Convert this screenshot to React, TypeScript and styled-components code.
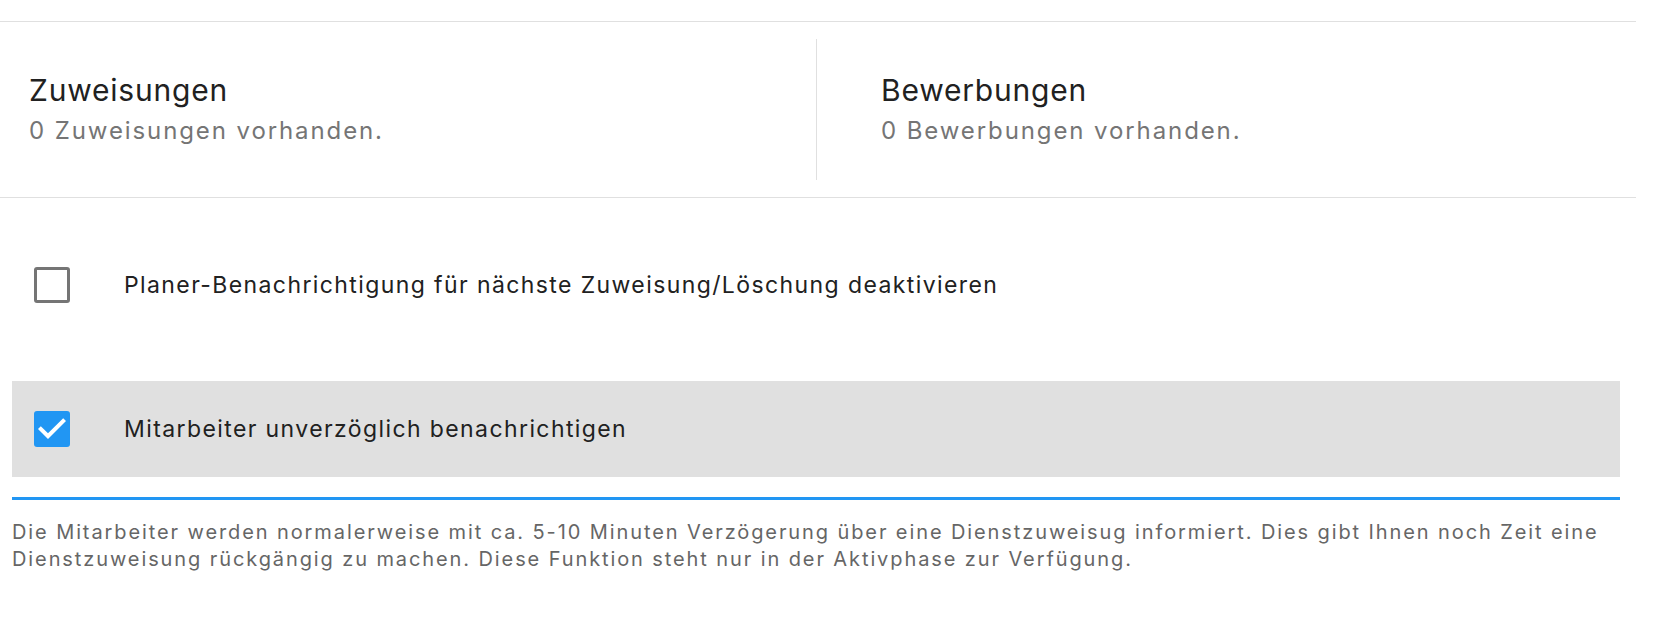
import React, { useState } from 'react';
import styled, { createGlobalStyle } from 'styled-components';

const GlobalStyle = createGlobalStyle`
  body {
    margin: 0;
    background: #fff;
    font-family: Inter, "Noto Sans", sans-serif;
    color: #212121;
  }
`;

const Page = styled.div`
  width: 1636px;
  padding-top: 21px;
`;

const Stats = styled.div`
  display: grid;
  grid-template-columns: 816px 1fr;
  border-top: 1px solid #e0e0e0;
  border-bottom: 1px solid #e0e0e0;
  height: 175px;
  align-items: center;
`;

const StatBox = styled.div<{ divided?: boolean }>`
  height: 141px;
  display: flex;
  flex-direction: column;
  padding-top: 33px;
  padding-left: ${props => (props.divided ? '64px' : '29px')};
  border-left: ${props => (props.divided ? '1px solid #e0e0e0' : 'none')};
  box-sizing: border-box;
`;

const StatTitle = styled.div`
  font-size: 30px;
  line-height: 36px;
  letter-spacing: 0.8px;
  color: #212121;
`;

const StatText = styled.div`
  margin-top: 6px;
  font-size: 24px;
  line-height: 34px;
  letter-spacing: 1.9px;
  color: #757575;
`;

const Form = styled.div`
  margin: 39px 16px 0 12px;
`;

const OptionRow = styled.label<{ active?: boolean }>`
  display: flex;
  align-items: center;
  height: 96px;
  padding-left: 22px;
  background: ${props => (props.active ? '#e0e0e0' : 'transparent')};
  cursor: pointer;
  & + & {
    margin-top: 48px;
  }
`;

const Box = styled.span<{ checked?: boolean }>`
  width: 36px;
  height: 36px;
  box-sizing: border-box;
  border-radius: 3px;
  border: ${props => (props.checked ? 'none' : '3.5px solid #757575')};
  background: ${props => (props.checked ? '#2196f3' : 'transparent')};
  display: flex;
  align-items: center;
  justify-content: center;
  flex-shrink: 0;
`;

const OptionLabel = styled.span`
  margin-left: 54px;
  font-size: 23px;
  letter-spacing: 1.4px;
  color: #212121;
`;

const Underline = styled.div`
  margin-top: 20px;
  height: 3px;
  background: #2196f3;
`;

const Hint = styled.p`
  margin: 19px 0 0;
  font-size: 20px;
  line-height: 27px;
  letter-spacing: 1.9px;
  color: #666;
`;

const Check = () => (
  <svg width="36" height="36" viewBox="3 3 18 18">
    <path d="M10 17l-5-5 1.41-1.41L10 14.17l7.59-7.59L19 8l-9 9z" fill="#fff" />
  </svg>
);

const App: React.FC = () => {
  const [planer, setPlaner] = useState(false);
  const [notify, setNotify] = useState(true);

  return (
    <>
      <GlobalStyle />
      <Page>
        <Stats>
          <StatBox>
            <StatTitle>Zuweisungen</StatTitle>
            <StatText>0 Zuweisungen vorhanden.</StatText>
          </StatBox>
          <StatBox divided>
            <StatTitle>Bewerbungen</StatTitle>
            <StatText>0 Bewerbungen vorhanden.</StatText>
          </StatBox>
        </Stats>
        <Form>
          <OptionRow onClick={() => setPlaner(!planer)}>
            <Box checked={planer}>{planer && <Check />}</Box>
            <OptionLabel>Planer-Benachrichtigung für nächste Zuweisung/Löschung deaktivieren</OptionLabel>
          </OptionRow>
          <OptionRow active onClick={() => setNotify(!notify)}>
            <Box checked={notify}>{notify && <Check />}</Box>
            <OptionLabel>Mitarbeiter unverzöglich benachrichtigen</OptionLabel>
          </OptionRow>
          <Underline />
          <Hint>
            Die Mitarbeiter werden normalerweise mit ca. 5-10 Minuten Verzögerung über eine Dienstzuweisug informiert. Dies gibt Ihnen noch Zeit eine Dienstzuweisung rückgängig zu machen. Diese Funktion steht nur in der Aktivphase zur Verfügung.
          </Hint>
        </Form>
      </Page>
    </>
  );
};

export default App;
